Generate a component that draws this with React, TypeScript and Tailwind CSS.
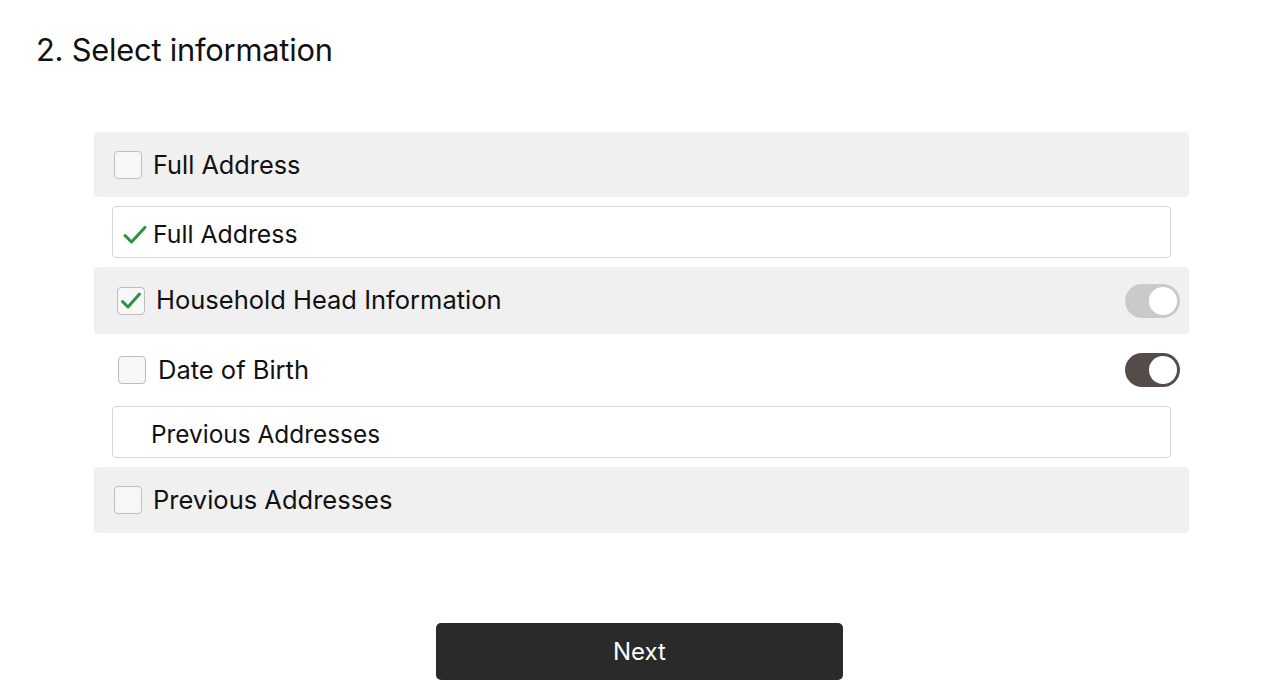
import React from "react";

const Checkbox: React.FC<{ checked?: boolean }> = ({ checked }) => (
  <span className="flex h-[28px] w-[28px] shrink-0 items-center justify-center rounded-[4px] border-[1.5px] border-[#bdbdbd] bg-[#f7f7f7]">
    {checked && (
      <svg width="24" height="24" viewBox="0 0 24 24" fill="none">
        <path d="M3.5 12.5l5.5 5.5L20.5 5" stroke="#2b9348" strokeWidth="3" strokeLinecap="round" strokeLinejoin="round" />
      </svg>
    )}
  </span>
);

const Toggle: React.FC<{ dark?: boolean }> = ({ dark }) => (
  <span
    className={
      dark
        ? "flex h-[34px] w-[55px] items-center justify-end rounded-full bg-[#534c49] px-[3px]"
        : "flex h-[34px] w-[55px] items-center justify-end rounded-full bg-[#cacaca] px-[3px]"
    }
  >
    <span className="h-[28px] w-[28px] rounded-full bg-white" />
  </span>
);

export default function App() {
  return (
    <div className="min-h-[698px] bg-white font-['Inter',sans-serif] text-[#111]">
      <h1 className="pl-[36px] pt-[30px] text-[30.8px] leading-[40px] tracking-[-0.2px]">
        2. Select information
      </h1>

      <div className="ml-[94px] mt-[62px] flex w-[1095px] flex-col gap-[9px]">
        <div className="flex h-[65px] items-center gap-[11px] rounded-[4px] bg-[#f0f0f0] pl-[20px]">
          <Checkbox />
          <span className="text-[25.3px]">Full Address</span>
        </div>

        <div className="mx-[18px] flex h-[52px] items-center gap-[4px] rounded-[4px] border border-[#d6d6d6] pl-[8px] pt-[5px]">
          <svg width="28" height="28" viewBox="0 0 24 24" fill="none">
            <path d="M3.5 12.5l5.5 5.5L20.5 5.5" stroke="#2b9348" strokeWidth="2.6" strokeLinecap="round" strokeLinejoin="round" />
          </svg>
          <span className="text-[24.8px]">Full Address</span>
        </div>

        <div className="flex h-[67px] items-center rounded-[4px] bg-[#f0f0f0] pl-[23px] pr-[9px]">
          <Checkbox checked />
          <span className="ml-[11px] flex-1 text-[25.5px]">Household Head Information</span>
          <Toggle />
        </div>

        <div className="flex h-[54px] items-center pl-[24px] pr-[9px]">
          <Checkbox />
          <span className="ml-[12px] flex-1 text-[25.5px]">Date of Birth</span>
          <Toggle dark />
        </div>

        <div className="mx-[18px] flex h-[52px] items-center rounded-[4px] border border-[#d6d6d6] pl-[38px] pt-[5px]">
          <span className="text-[24.4px]">Previous Addresses</span>
        </div>

        <div className="flex h-[66px] items-center gap-[11px] rounded-[4px] bg-[#f0f0f0] pl-[20px]">
          <Checkbox />
          <span className="text-[25.5px]">Previous Addresses</span>
        </div>
      </div>

      <div className="mt-[90px] flex justify-center">
        <button className="ml-[-1px] h-[57px] w-[407px] rounded-[5px] bg-[#2a2a2a] text-[24px] text-white">
          Next
        </button>
      </div>
    </div>
  );
}
